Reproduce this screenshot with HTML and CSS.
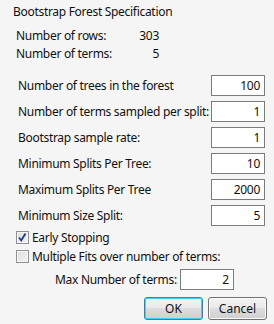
FILE: index.html
```html
<!DOCTYPE html>
<html lang="en">
<head>
    <meta charset="UTF-8">
    <meta name="viewport" content="width=device-width, initial-scale=1.0">
    <title>Bootstrap Forest Specification</title>
    <link rel="stylesheet" href="styles.css">
</head>
<body>
    <div class="dialog">
        <h1 class="title">Bootstrap Forest Specification</h1>

        <div class="info">
            <div class="info-row"><span>Number of rows:</span><span>303</span></div>
            <div class="info-row"><span>Number of terms:</span><span>5</span></div>
        </div>

        <div class="fields">
            <div class="field"><label>Number of trees in the forest</label><span class="box">100</span></div>
            <div class="field"><label>Number of terms sampled per split:</label><span class="box">1</span></div>
            <div class="field"><label>Bootstrap sample rate:</label><span class="box">1</span></div>
            <div class="field"><label>Minimum Splits Per Tree:</label><span class="box">10</span></div>
            <div class="field"><label>Maximum Splits Per Tree</label><span class="box">2000</span></div>
            <div class="field"><label>Minimum Size Split:</label><span class="box">5</span></div>
        </div>

        <div class="checks">
            <div class="check">
                <span class="cb checked">
                    <svg width="11" height="11" viewBox="0 0 11 11"><path d="M2 5.5 L4.2 8.5 L8.5 1.5" fill="none" stroke="#1c3d8f" stroke-width="1.8"/></svg>
                </span>
                <span>Early Stopping</span>
            </div>
            <div class="check">
                <span class="cb"></span>
                <span>Multiple Fits over number of terms:</span>
            </div>
        </div>

        <div class="max-row">
            <label>Max Number of terms:</label><span class="box">2</span>
        </div>

        <div class="buttons">
            <button class="btn default">OK</button>
            <button class="btn">Cancel</button>
        </div>
    </div>
</body>
</html>
```

FILE: styles.css
```css
body {
    margin: 0;
    background: #f5f5f5;
    font-family: "Noto Sans", "Open Sans", sans-serif;
    font-size: 12px;
    letter-spacing: -0.3px;
    color: #111;
    white-space: nowrap;
}
.dialog {
    width: 274px;
    height: 324px;
    overflow: hidden;
}
.title {
    margin: 3px 0 0 13px;
    font-size: 12px;
    font-weight: normal;
    line-height: 18px;
}
.info {
    margin-top: 6px;
    padding-left: 16px;
    width: 143px;
}
.info-row {
    display: flex;
    justify-content: space-between;
    line-height: 18px;
}
.fields {
    margin-top: 12px;
}
.field {
    display: flex;
    align-items: center;
    height: 21px;
    margin-bottom: 5px;
    padding: 0 9px 0 18px;
}
.box {
    box-sizing: border-box;
    height: 21px;
    width: 54px;
    margin-left: auto;
    border: 1px solid #7c7c7c;
    background: #fff;
    text-align: right;
    padding-right: 4px;
    line-height: 19px;
}
.checks {
    margin-top: 4px;
    padding-left: 16px;
}
.check {
    display: flex;
    align-items: center;
    height: 13px;
    margin-bottom: 6px;
}
.cb {
    box-sizing: border-box;
    width: 13px;
    height: 13px;
    margin-right: 3px;
    border: 1px solid #8f8f8f;
    background: linear-gradient(135deg, #dcdcdc, #f4f4f4);
    box-shadow: inset 0 0 0 1px #f8f8f8;
    display: flex;
    align-items: center;
    justify-content: center;
}
.max-row {
    display: flex;
    align-items: center;
    height: 21px;
    padding-left: 55px;
}
.max-row label {
    margin-right: 3px;
}
.max-row .box {
    margin-left: 0;
}
.buttons {
    display: flex;
    justify-content: flex-end;
    gap: 5px;
    margin-top: 7px;
    padding-right: 7px;
}
.btn {
    box-sizing: border-box;
    width: 59px;
    height: 23px;
    font: inherit;
    color: #111;
    border: 1px solid #707070;
    border-radius: 3px;
    background: linear-gradient(#f2f2f2 0%, #ebebeb 45%, #dddddd 50%, #cfcfcf 100%);
    box-shadow: inset 0 0 0 1px #fcfcfc;
    padding: 0;
}
.btn.default {
    border-color: #3c7fb1;
    box-shadow: inset 0 0 0 1px #48d1f8;
}
```
